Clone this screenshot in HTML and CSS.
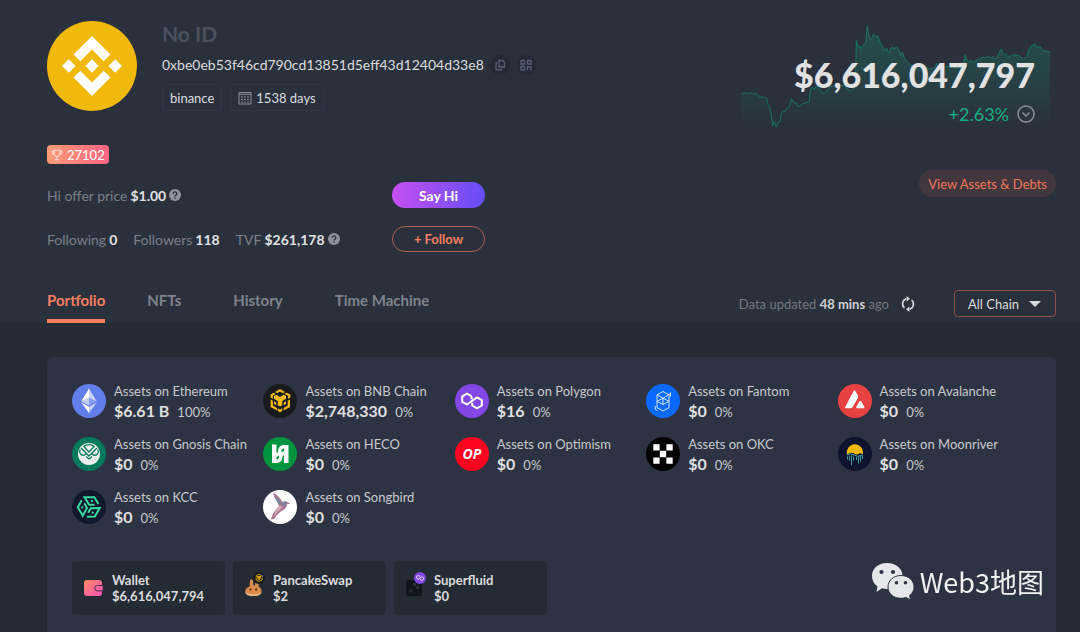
FILE: index.html
```html
<!DOCTYPE html>
<html lang="en">
<head>
    <meta charset="UTF-8">
    <meta name="viewport" content="width=device-width, initial-scale=1.0">
    <title>binance - Portfolio</title>
    <link rel="stylesheet" href="styles.css">
</head>
<body>

<header class="header">
    <div class="top">
        <div class="user">
            <div class="profile">
                <svg class="avatar" viewBox="0 0 90 90" aria-hidden="true">
                    <circle cx="45" cy="45" r="45" fill="#f0b90b"/>
                    <path fill="#fff" d="M45 15l18.5 18.5-6.8 6.8L45 28.6 33.300 40.300l-6.800-6.800zM15 45l6.800-6.800 6.800 6.800-6.800 6.800zM38.200 45l6.800-6.800 6.800 6.800-6.800 6.800zM61.400 45l6.800-6.800 6.800 6.800-6.800 6.800zM33.300 49.700L45 61.400l11.700-11.700 6.800 6.800L45 75 26.500 56.500z"/>
                </svg>
                <div class="info">
                    <h1>No ID</h1>
                    <div class="address">
                        <span>0xbe0eb53f46cd790cd13851d5eff43d12404d33e8</span>
                        <button class="round" aria-label="Copy address">
                            <svg viewBox="0 0 12 12"><path d="M5 1.500h3.500l2 2v4.500h-5.500zM3.500 3.800H2v7h5.500V9.500"/></svg>
                        </button>
                        <button class="round" aria-label="Show QR code">
                            <svg viewBox="0 0 12 12"><path d="M1 1.500h3.500v3.500H1zM7.500 1.500h3.500v3.500H7.500zM1 7.500h3.500v3.500H1zM7.500 7v4.500M11 7v4.500M9.300 7v2"/></svg>
                        </button>
                    </div>
                    <div class="tags">
                        <span class="tag">binance</span>
                        <span class="tag">
                            <svg viewBox="0 0 14 14"><path class="line" d="M1 1.500h12v11.500H1zM1 3.300h12"/><path class="dots" d="M3 6h8M3 8.500h8M3 11h8"/></svg>
                            1538 days
                        </span>
                    </div>
                </div>
            </div>
            <div class="rank">
                <svg viewBox="0 0 12 12"><path d="M3 1h6v3.500a3 3 0 0 1-6 0zM3 2H1v1.500a2 2 0 0 0 2 2M9 2h2v1.500a2 2 0 0 1-2 2M6 7.500v3M3.500 10.800h5"/></svg>
                27102
            </div>
            <div class="social">
                <p>Hi offer price <strong>$1.00</strong> <svg class="help" viewBox="0 0 12 12"><circle cx="6" cy="6" r="6"/><path d="M4.200 4.700a1.800 1.800 0 1 1 2.600 1.600q-.8.400-.8 1.100M6 8.500v1.200"/></svg></p>
                <button class="hi">Say Hi</button>
                <p>
                    <span>Following <strong>0</strong></span>
                    <span>Followers <strong>118</strong></span>
                    <span>TVF <strong>$261,178</strong> <svg class="help" viewBox="0 0 12 12"><circle cx="6" cy="6" r="6"/><path d="M4.200 4.700a1.800 1.800 0 1 1 2.600 1.600q-.8.400-.8 1.100M6 8.500v1.200"/></svg></span>
                </p>
                <button class="follow">+ Follow</button>
            </div>
        </div>

        <div class="worth">
            <svg class="chart" viewBox="33 40 930 320" aria-hidden="true">
                <defs>
                    <linearGradient id="area" x1="0" y1="0" x2="0" y2="1">
                        <stop offset="0" stop-color="#10a678" stop-opacity=".26"/>
                        <stop offset=".45" stop-color="#10a678" stop-opacity=".17"/>
                        <stop offset="1" stop-color="#10a678" stop-opacity="0"/>
                    </linearGradient>
                </defs>
                <path fill="url(#area)" d="M34 340V252L45 248 52 251 62 249 70 253 78 250 85 258 95 262 105 262 110 266 114 284 120 296 124 312 128 348 133 335 139 352 144 338 150 335 154 312 160 304 166 304 170 296 178 290 185 267 192 280 198 277 204 290 213 286 220 281 237 277 240 245 246 232 252 238 260 228 268 238 280 253 290 245 300 230 320 228 345 226 352 238 362 245 370 236 376 232 379 90 384 112 390 108 394 117 400 104 407 98 412 48 418 82 425 88 430 72 438 82 443 78 450 96 458 110 462 122 470 115 476 130 484 113 492 116 500 112 506 118 512 138 517 127 524 148 532 155 540 164 552 172 565 180 580 168 600 178 615 172 620 160 625 178 640 172 655 170 680 175 700 172 705 135 710 148 716 157 722 150 728 158 745 148 760 142 768 144 776 139 784 144 790 140 796 147 804 138 813 118 822 135 828 132 832 140 845 138 855 135 868 138 880 148 890 140 898 118 905 107 914 102 922 114 930 110 938 122 950 124 960 126V340z"/>
                <path class="trend" d="M34 252L45 248 52 251 62 249 70 253 78 250 85 258 95 262 105 262 110 266 114 284 120 296 124 312 128 348 133 335 139 352 144 338 150 335 154 312 160 304 166 304 170 296 178 290 185 267 192 280 198 277 204 290 213 286 220 281 237 277 240 245 246 232 252 238 260 228 268 238 280 253 290 245 300 230 320 228 345 226 352 238 362 245 370 236 376 232 379 90 384 112 390 108 394 117 400 104 407 98 412 48 418 82 425 88 430 72 438 82 443 78 450 96 458 110 462 122 470 115 476 130 484 113 492 116 500 112 506 118 512 138 517 127 524 148 532 155 540 164 552 172 565 180 580 168 600 178 615 172 620 160 625 178 640 172 655 170 680 175 700 172 705 135 710 148 716 157 722 150 728 158 745 148 760 142 768 144 776 139 784 144 790 140 796 147 804 138 813 118 822 135 828 132 832 140 845 138 855 135 868 138 880 148 890 140 898 118 905 107 914 102 922 114 930 110 938 122 950 124 960 126"/>
            </svg>
            <div class="total">$6,616,047,797</div>
            <div class="change">
                +2.63%
                <button class="expand" aria-label="Show details"><svg viewBox="0 0 18 18"><circle cx="9" cy="9" r="8"/><path d="M5.500 7.500L9 11l3.500-3.500"/></svg></button>
            </div>
            <button class="debts">View Assets &amp; Debts</button>
        </div>
    </div>

    <div class="bar">
        <nav class="tabs">
            <a class="active" href="#portfolio">Portfolio</a>
            <a href="#nfts">NFTs</a>
            <a href="#history">History</a>
            <a href="#time">Time Machine</a>
        </nav>
        <div class="tools">
            <span class="updated">Data updated <b>48 mins</b> ago</span>
            <button class="refresh" aria-label="Refresh">
                <svg viewBox="0 0 14 16"><path class="arc" d="M5 2.800A5.500 5.500 0 0 0 3.400 12M9 13.200A5.500 5.500 0 0 0 10.600 4"/><path class="tip" d="M5.500 0l3.500 2.800-3.500 2.800zM8.500 16L5 13.200l3.500-2.800z"/></svg>
            </button>
            <div class="select">
                <select aria-label="Chain"><option>All Chain</option></select>
            </div>
        </div>
    </div>
</header>

<main class="main">
    <section class="panel">
        <div class="chains">
            <div class="chain">
                <svg viewBox="0 0 34 34"><circle cx="17" cy="17" r="17" fill="#627eea"/><path fill="#fff" fill-opacity=".65" d="M17 4.500v9.200l7.700 3.500z"/><path fill="#fff" d="M17 4.500L9.300 17.200l7.700-3.500z"/><path fill="#fff" fill-opacity=".65" d="M17 22.800v6.200l7.700-10.500z"/><path fill="#fff" d="M17 29v-6.200l-7.700-4.300z"/><path fill="#fff" fill-opacity=".25" d="M17 21.600l7.700-4.400-7.700-3.500z"/><path fill="#fff" fill-opacity=".6" d="M9.300 17.200l7.700 4.400v-7.900z"/></svg>
                <div><h3>Assets on Ethereum</h3><p><strong>$6.61 B</strong>100%</p></div>
            </div>
            <div class="chain">
                <svg viewBox="0 0 34 34"><circle cx="17" cy="17" r="17" fill="#191a1e"/><path id="bnb" fill="#f0b90b" d="M17 5l5 2.900-2.200 1.300L17 7.600l-2.800 1.600L12 7.900zM10.500 8.800l2.200 1.300-2.800 1.600v3.200l-2.300-1.300v-3.200zM23.500 8.800l3.900 1.600v3.200l-2.300 1.300v-3.200l-3.800-1.600zM7.600 15.500l2.300 1.300v4.800l4 2.400v2.600l-6.300-3.700zM27 15.500v7.400l-6.300 3.700V24l4-2.400v-4.800zM11 12l2.300-1.300 3.700 2.200 3.700-2.200L23 12v2.700l-3.700 2.200v4.300L17 22.500l-2.300-1.300v-4.300L11 14.700zM11 17.300l2.200 1.300v2.700L11 20zM23 17.300V20l-2.200 1.300v-2.700zM14.700 24.200l2.300 1.300 2.300-1.300v2.600L17 28.500l-2.300-1.700z"/></svg>
                <div><h3>Assets on BNB Chain</h3><p><strong>$2,748,330</strong>0%</p></div>
            </div>
            <div class="chain">
                <svg viewBox="0 0 34 34"><circle cx="17" cy="17" r="17" fill="#8247e5"/><path id="poly" fill="none" stroke="#fff" stroke-width="2" stroke-linejoin="round" d="M16.500 12.200L12 9.600l-4.800 2.800v5.400l4.800 2.700 10-7.100 4.800 2.800v5.300L22 24.300l-4.800-2.800v-2.800M16.500 12.200v3"/></svg>
                <div><h3>Assets on Polygon</h3><p><strong>$16</strong>0%</p></div>
            </div>
            <div class="chain">
                <svg viewBox="0 0 34 34"><circle cx="17" cy="17" r="17" fill="#0a69ff"/><path fill="none" stroke="#d5e5ff" stroke-width="1" stroke-linejoin="round" d="M17 7.500l6 3.300v12.800l-6 3.400-6-3.400V10.800zM11 10.800l6 3.400 6-3.400M11 17.300l6-3.100 6 3.100-6 3.200zM17 14.200v6.300M24.500 8.500v4M9.300 22v3.500l2 1M24.500 9l-1.500 1.800"/></svg>
                <div><h3>Assets on Fantom</h3><p><strong>$0</strong>0%</p></div>
            </div>
            <div class="chain">
                <svg viewBox="0 0 34 34"><circle cx="17" cy="17" r="17" fill="#e84142"/><path fill="#fff" d="M15.500 7.200q1-1.800 2 0l2.400 4.300q.6 1.200 0 2.400l-5.200 9q-.7 1.300-2.200 1.300H8.200q-1.700 0-.9-1.500zM21.300 17.400q1-1.500 2 0l3 5.300q.7 1.500-.8 1.500h-6.300q-1.600 0-.8-1.500z"/></svg>
                <div><h3>Assets on Avalanche</h3><p><strong>$0</strong>0%</p></div>
            </div>
            <div class="chain">
                <svg viewBox="0 0 34 34"><circle cx="17" cy="17" r="17" fill="#04795b"/><circle cx="17" cy="17" r="11" fill="#f0f0f0"/><path fill="#04795b" d="M10.800 9.300Q17 4.500 23.200 9.300L17 16z"/><path fill="#f0f0f0" d="M12.800 9.500Q17 7 21.200 9.500L17 14z"/><path fill="none" stroke="#04795b" stroke-width="1.300" d="M9 11l8 8 8-8M8.300 12.500a3.600 3.600 0 1 0 6 4.200M25.700 12.500a3.600 3.600 0 1 1-6 4.200M14 19.500l3 2.500 3-2.500"/></svg>
                <div><h3>Assets on Gnosis Chain</h3><p><strong>$0</strong>0%</p></div>
            </div>
            <div class="chain">
                <svg viewBox="0 0 34 34"><circle cx="17" cy="17" r="17" fill="#01943f"/><path fill="#fff" d="M9 7.500h4.500v18.500H9zM21 8h4.500v18H21z"/><path fill="none" stroke="#fff" stroke-width="3.400" d="M12 18q4.500 0 4.800-4.200.2-4 4.700-4.300M22.500 16q-4.500 0-4.800 4.200-.2 4-4.700 4.300"/></svg>
                <div><h3>Assets on HECO</h3><p><strong>$0</strong>0%</p></div>
            </div>
            <div class="chain">
                <svg viewBox="0 0 34 34"><circle cx="17" cy="17" r="17" fill="#ff0420"/><text class="op" x="17" y="22" text-anchor="middle">OP</text></svg>
                <div><h3>Assets on Optimism</h3><p><strong>$0</strong>0%</p></div>
            </div>
            <div class="chain">
                <svg viewBox="0 0 34 34"><circle cx="17" cy="17" r="17" fill="#000"/><path fill="#fff" d="M7.300 7.300h6.300v6.300H7.300zM20.400 7.300h6.300v6.300h-6.300zM13.850 13.850h6.300v6.300h-6.300zM7.300 20.400h6.300v6.300H7.300zM20.400 20.400h6.300v6.300h-6.300z"/></svg>
                <div><h3>Assets on OKC</h3><p><strong>$0</strong>0%</p></div>
            </div>
            <div class="chain">
                <svg viewBox="0 0 34 34"><circle cx="17" cy="17" r="17" fill="#0e132e"/><path fill="#f2b705" d="M9 17.500a8.200 8.200 0 1 1 16-.5l-3.500-.8q-3 2.500-6 0-3-1.400-6.500 1.300z"/><path fill="none" stroke="#3f9ea3" stroke-width="1" d="M9 18q3.500-2.500 7 0t9 0M9.500 19.500v3M11.500 18.500v5M13.500 18.500v9.500M15.500 19.500v4M18.500 19.500v3.500M20.500 19.500v7M22.500 19v5.500M24.500 19v3"/></svg>
                <div><h3>Assets on Moonriver</h3><p><strong>$0</strong>0%</p></div>
            </div>
            <div class="chain">
                <svg viewBox="0 0 34 34"><circle cx="17" cy="17" r="17" fill="#0f192b"/><g fill="none" stroke="#36d9a0" stroke-width="2"><path id="kcc" d="M26.500 14L22.300 7.200H12.500l4.700 7.600h5.300M19 11h2"/><use href="#kcc" transform="rotate(120 17 17)"/><use href="#kcc" transform="rotate(240 17 17)"/></g></svg>
                <div><h3>Assets on KCC</h3><p><strong>$0</strong>0%</p></div>
            </div>
            <div class="chain">
                <svg viewBox="0 0 34 34"><circle cx="17" cy="17" r="17" fill="#fff"/><path fill="#a9748c" d="M10 2.500q5.500 3 9.500 9.500l3-1 1.500 1 3.500 1.500-3.500.7q0 3.300-3 5.300-5 2.500-7.500 6l-2.500 3.500-3 .5q1-5.500 4.500-9.500l3.500-4-1.500-4q-3.500-4-4.500-9.500z"/><path fill="#6f8ba5" d="M11 5l7.500 7.500-2.500 2-2.500-4zM20 12l3-.5-.5 3.500-3 1z"/><path fill="#d3aebb" d="M16 16l4 .5-5 5-4 5 1.500-5.500z"/></svg>
                <div><h3>Assets on Songbird</h3><p><strong>$0</strong>0%</p></div>
            </div>
        </div>

        <div class="projects">
            <a class="project" href="#wallet">
                <svg viewBox="0 0 22 24">
                    <defs><linearGradient id="pink" x1="0" y1="0" x2="1" y2="1"><stop offset="0" stop-color="#ff8a66"/><stop offset="1" stop-color="#ff4fb4"/></linearGradient></defs>
                    <rect x="2" y="8" width="18" height="16" rx="3" fill="url(#pink)"/><path fill="#ff62a3" stroke="#46304a" d="M21 13.500h-5.500a2.700 2.700 0 0 0 0 5.400H21z"/>
                </svg>
                <div><h4>Wallet</h4><p>$6,616,047,794</p></div>
            </a>
            <a class="project" href="#pancakeswap">
                <svg viewBox="0 0 22 24">
                    <path fill="#d98b4b" d="M7 8.500q0-1 1.500-1T10 9l.5 4.500h1.500l.5-4q.3-1.500 2-1t1.500 1.500L15.500 14.500q3 1.500 3 4.500 0 4.800-8.200 4.800T2.300 19q0-3 4.400-4.500z"/><path fill="#f2c088" d="M2.300 19.500q1.500 3 8 3t8.200-3q0 4.500-8.200 4.500t-8-4.500z"/><ellipse cx="7.500" cy="17.500" rx="1" ry="1.300" fill="#633001"/><ellipse cx="13.200" cy="17.500" rx="1" ry="1.300" fill="#633001"/>
                    <circle cx="16" cy="6" r="6" fill="#191a1e"/><use href="#bnb" transform="translate(10 0) scale(.353)"/>
                </svg>
                <div><h4>PancakeSwap</h4><p>$2</p></div>
            </a>
            <a class="project" href="#superfluid">
                <svg viewBox="0 0 22 24">
                    <rect x="2" y="8" width="16" height="16" rx="2" fill="#12141e"/><path fill="#292e3a" d="M5.500 17.500h3v3h-3zM9 11h3v3h3v3h-3v-3H9z"/>
                    <circle cx="16" cy="6" r="6" fill="#8247e5"/><use href="#poly" transform="translate(10 0) scale(.353)"/>
                </svg>
                <div><h4>Superfluid</h4><p>$0</p></div>
            </a>
        </div>
    </section>
</main>

<div class="watermark">
    <svg viewBox="0 0 44 38">
        <path fill="#e6e7e9" d="M16 0c9 0 15.500 5.600 15.500 13S25 26 16 26q-2.500 0-5-.7L5.500 29l1-5.500Q1 19.500 1 13C1 5.600 7 0 16 0z"/>
        <path class="front" d="M30 12.500c7.500 0 13 5 13 11.500 0 3.500-1.700 6.500-4.500 8.700l1.200 4.300-4.800-2.500q-2.300.8-4.900.8c-7.500 0-13-4.800-13-11.300s5.500-11.500 13-11.500z"/>
        <g fill="#2e3343"><circle cx="10.500" cy="9" r="2.100"/><circle cx="22" cy="9" r="2.100"/><circle cx="25.500" cy="19.800" r="1.800"/><circle cx="34.500" cy="19.800" r="1.800"/></g>
    </svg>
    Web3地图
</div>

</body>
</html>
```
FILE: styles.css
```css
* {
    box-sizing: border-box;
}
body {
    margin: 0;
    min-height: 100vh;
    display: flex;
    flex-direction: column;
    font-family: Lato, "Liberation Sans", sans-serif;
    font-size: 13px;
    color: #dcdcde;
    background-color: #252b35;
}
h1, h3, h4, p {
    margin: 0;
}
button, select {
    font-family: inherit;
    cursor: pointer;
}
a {
    color: inherit;
    text-decoration: none;
}

/* header */
.header {
    padding: 21px 24px 0 47px;
    background-color: #2b303d;
}
.top {
    display: flex;
    justify-content: space-between;
}
.profile {
    display: flex;
    gap: 25px;
}
.avatar {
    width: 90px;
    height: 90px;
}
.info h1 {
    font-size: 21px;
    line-height: 26px;
    color: #4c505d;
}
.address {
    display: flex;
    align-items: center;
    gap: 6px;
    margin-top: 8px;
    font-size: 14px;
    line-height: 20px;
}
.round {
    display: flex;
    align-items: center;
    justify-content: center;
    width: 20px;
    height: 20px;
    padding: 0;
    border: none;
    border-radius: 50%;
    background-color: #252a35;
}
.round svg {
    width: 12px;
    height: 12px;
    fill: none;
    stroke: #5a6078;
    stroke-width: 1.3;
}
.tags {
    display: flex;
    gap: 8px;
    margin-top: 9px;
}
.tag {
    display: flex;
    align-items: center;
    gap: 4px;
    height: 27px;
    padding: 0 7px;
    border: 1px solid #313747;
    border-radius: 3px;
}
.tag svg {
    width: 14px;
    height: 14px;
    fill: none;
    stroke: #8b8f9c;
}
.tag .dots {
    stroke-dasharray: 2 1;
}
.rank {
    display: inline-flex;
    align-items: center;
    gap: 4px;
    height: 19px;
    margin-top: 34px;
    padding: 0 4px;
    border-radius: 4px;
    color: #fff;
    background: linear-gradient(90deg, #ff9c75, #ff6482);
}
.rank svg {
    width: 12px;
    height: 12px;
    fill: none;
    stroke: #ffe3d9;
}
.social {
    display: grid;
    grid-template-columns: 345px 93px;
    align-items: center;
    row-gap: 18px;
    margin-top: 18px;
    font-size: 14px;
    color: #7c7f89;
}
.social p {
    display: flex;
    align-items: center;
    gap: 3px;
}
.social span {
    display: flex;
    align-items: center;
    gap: 3px;
    margin-right: 13px;
}
.social strong {
    color: #e2e2e4;
}
.help {
    width: 12px;
    height: 12px;
    fill: #8f929c;
}
.help path {
    fill: none;
    stroke: #2b303d;
    stroke-width: 1.3;
}
.hi, .follow {
    height: 26px;
    border: none;
    border-radius: 13px;
    font-size: 14px;
    font-weight: bold;
    color: #fff;
    background: linear-gradient(90deg, #c54ff2, #654ef5);
}
.follow {
    border: 1px solid #b0604f;
    font-size: 13px;
    color: #f57e60;
    background: none;
}

/* net worth */
.worth {
    position: relative;
    display: flex;
    flex-direction: column;
    align-items: flex-end;
    width: 315px;
}
.chart {
    position: absolute;
    top: 2px;
    right: 5px;
    width: 310px;
    height: 107px;
}
.trend {
    fill: none;
    stroke: #16735f;
    stroke-width: 3;
}
.total, .change {
    position: relative;
    margin-right: 21px;
}
.total {
    margin-top: 34px;
    font-size: 34px;
    line-height: 40px;
    font-weight: 900;
    color: #e2e2e3;
}
.change {
    display: flex;
    align-items: center;
    gap: 8px;
    margin-top: 7px;
    font-size: 18px;
    line-height: 24px;
    color: #14b184;
}
.expand {
    display: flex;
    padding: 0;
    border: none;
    background: none;
}
.expand svg {
    width: 18px;
    height: 18px;
    fill: none;
    stroke: #8b8e98;
    stroke-width: 1.5;
}
.debts {
    height: 27px;
    margin-top: 44px;
    padding: 0 9px;
    border: none;
    border-radius: 14px;
    font-size: 13px;
    color: #ee7759;
    background-color: #43373f;
}

/* tabs */
.bar {
    display: flex;
    justify-content: space-between;
    height: 46px;
    margin-top: 25px;
}
.tabs {
    display: flex;
    font-size: 15px;
    font-weight: bold;
    line-height: 18px;
    color: #7f828c;
}
.tabs a {
    padding-top: 14px;
    margin-right: 42px;
}
.tabs a + a {
    margin-right: 52px;
}
.tabs .active {
    color: #f57e60;
    border-bottom: 4px solid #f57e60;
}
.tools {
    display: flex;
    align-items: center;
    align-self: flex-start;
    margin-top: 13px;
}
.updated {
    color: #73767f;
}
.updated b {
    color: #d0d1d4;
}
.refresh {
    display: flex;
    margin: 0 39px 0 12px;
    padding: 0;
    border: none;
    background: none;
}
.refresh svg {
    width: 14px;
    height: 16px;
}
.arc {
    fill: none;
    stroke: #dcdcde;
    stroke-width: 1.6;
}
.tip {
    fill: #dcdcde;
}
.select {
    position: relative;
}
.select select {
    appearance: none;
    width: 102px;
    height: 27px;
    padding: 0 13px;
    border: 1px solid #8e5149;
    border-radius: 4px;
    font-size: 13px;
    color: #dcdcde;
    background: none;
}
.select::after {
    content: "";
    position: absolute;
    top: 11px;
    right: 15px;
    border: 6px solid transparent;
    border-top-color: #dcdcde;
    border-bottom: none;
    pointer-events: none;
}

/* portfolio */
.main {
    flex: 1;
    display: flex;
    padding: 34px 24px 0 47px;
}
.panel {
    flex: 1;
    padding: 24px 27px 16px 25px;
    border-radius: 6px 6px 0 0;
    background-color: #2e3343;
}
.chains {
    display: grid;
    grid-template-columns: repeat(5, 1fr);
    row-gap: 13px;
}
.chain {
    display: flex;
    align-items: center;
    gap: 8px;
    height: 40px;
}
.chain svg {
    width: 34px;
    height: 34px;
}
.chain h3 {
    font-size: 13px;
    font-weight: normal;
    line-height: 20px;
    color: #c8c9cd;
}
.chain p {
    line-height: 20px;
    color: #c8c9cd;
}
.chain strong {
    margin-right: 8px;
    font-size: 16px;
    color: #e0e0e1;
}
.op {
    font-family: "Open Sans", sans-serif;
    font-size: 14px;
    font-weight: bold;
    font-style: italic;
    fill: #fff;
}
.projects {
    display: flex;
    gap: 8px;
    margin-top: 34px;
}
.project {
    display: flex;
    gap: 8px;
    width: 153px;
    height: 54px;
    padding: 11px 10px;
    border-radius: 4px;
    font-weight: bold;
    line-height: 16px;
    background-color: #252b35;
}
.project svg {
    width: 22px;
    height: 24px;
}
.project h4 {
    font-size: 13px;
}

.watermark {
    position: fixed;
    right: 36px;
    bottom: 31px;
    display: flex;
    align-items: center;
    gap: 5px;
    font-family: "Noto Sans CJK SC", sans-serif;
    font-size: 27px;
    line-height: 38px;
    color: #f2f2f3;
}
.watermark svg {
    width: 44px;
    height: 38px;
}
.front {
    fill: #e6e7e9;
    stroke: #2e3343;
}
```
